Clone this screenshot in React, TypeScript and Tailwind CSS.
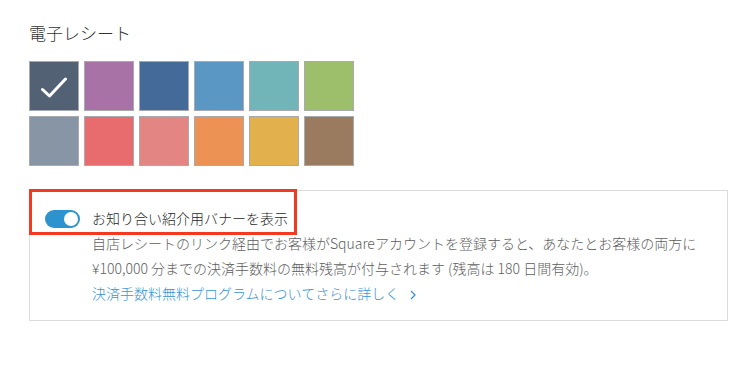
import React from "react";

const colors = [
  "#536175", "#a972a6", "#446a99", "#5a97c5", "#72b5b9", "#9dbf6b",
  "#8795a5", "#e86b6d", "#e28583", "#ed9255", "#e2b04c", "#9a7b60",
];

export default function App() {
  return (
    <div
      className="w-[756px] h-[369px] bg-white pl-[29px] pt-[19px]"
      style={{ fontFamily: '"Noto Sans CJK JP", "Noto Sans", sans-serif' }}
    >
      <div className="text-[17px] leading-[28px] font-light text-[#333333]">電子レシート</div>
      <div className="mt-[14px] grid grid-cols-[repeat(6,50px)] gap-[5px]">
        {colors.map((c, i) => (
          <div
            key={i}
            className="w-[50px] h-[50px] border border-[#a8aaad] flex items-center justify-center"
            style={{ backgroundColor: c }}
          >
            {i === 0 && (
              <svg width="28" height="22" viewBox="0 0 28 22" className="mt-[4px]">
                <path d="M2.5 12.5 L9.5 19 L25.5 2" fill="none" stroke="white" strokeWidth="3" strokeLinecap="round" strokeLinejoin="round" />
              </svg>
            )}
          </div>
        ))}
      </div>
      <div className="relative mt-[24px] w-[699px] h-[131px] border border-[#dcdcdc] pl-[15px] pt-[15px]">
        <div className="absolute left-[-1px] top-[-2px] w-[268px] h-[46px] border-[3px] border-[#f33a20]" />
        <div className="flex items-center h-[25px]">
          <div className="w-[35px] h-[18px] rounded-full bg-[#2d93cf] flex items-center justify-end pr-[2px]">
            <div className="w-[14px] h-[14px] rounded-full bg-white" />
          </div>
          <span className="ml-[12px] text-[14px] leading-[25px] font-light text-[#1f1f1f]">お知り合い紹介用バナーを表示</span>
        </div>
        <div className="pl-[47px] text-[14px] leading-[25px] font-light text-[#5e5e5e]">
          <div>自店レシートのリンク経由でお客様がSquareアカウントを登録すると、あなたとお客様の両方に</div>
          <div>¥100,000 分までの決済手数料の無料残高が付与されます (残高は 180 日間有効)。</div>
          <div className="flex items-center text-[#3a94d0]">
            <span>決済手数料無料プログラムについてさらに詳しく</span>
            <svg width="6" height="10" viewBox="0 0 6 10" className="ml-[11px] mt-[2px]">
              <path d="M1 1 L5 5 L1 9" fill="none" stroke="#3a94d0" strokeWidth="1.3" />
            </svg>
          </div>
        </div>
      </div>
    </div>
  );
}
